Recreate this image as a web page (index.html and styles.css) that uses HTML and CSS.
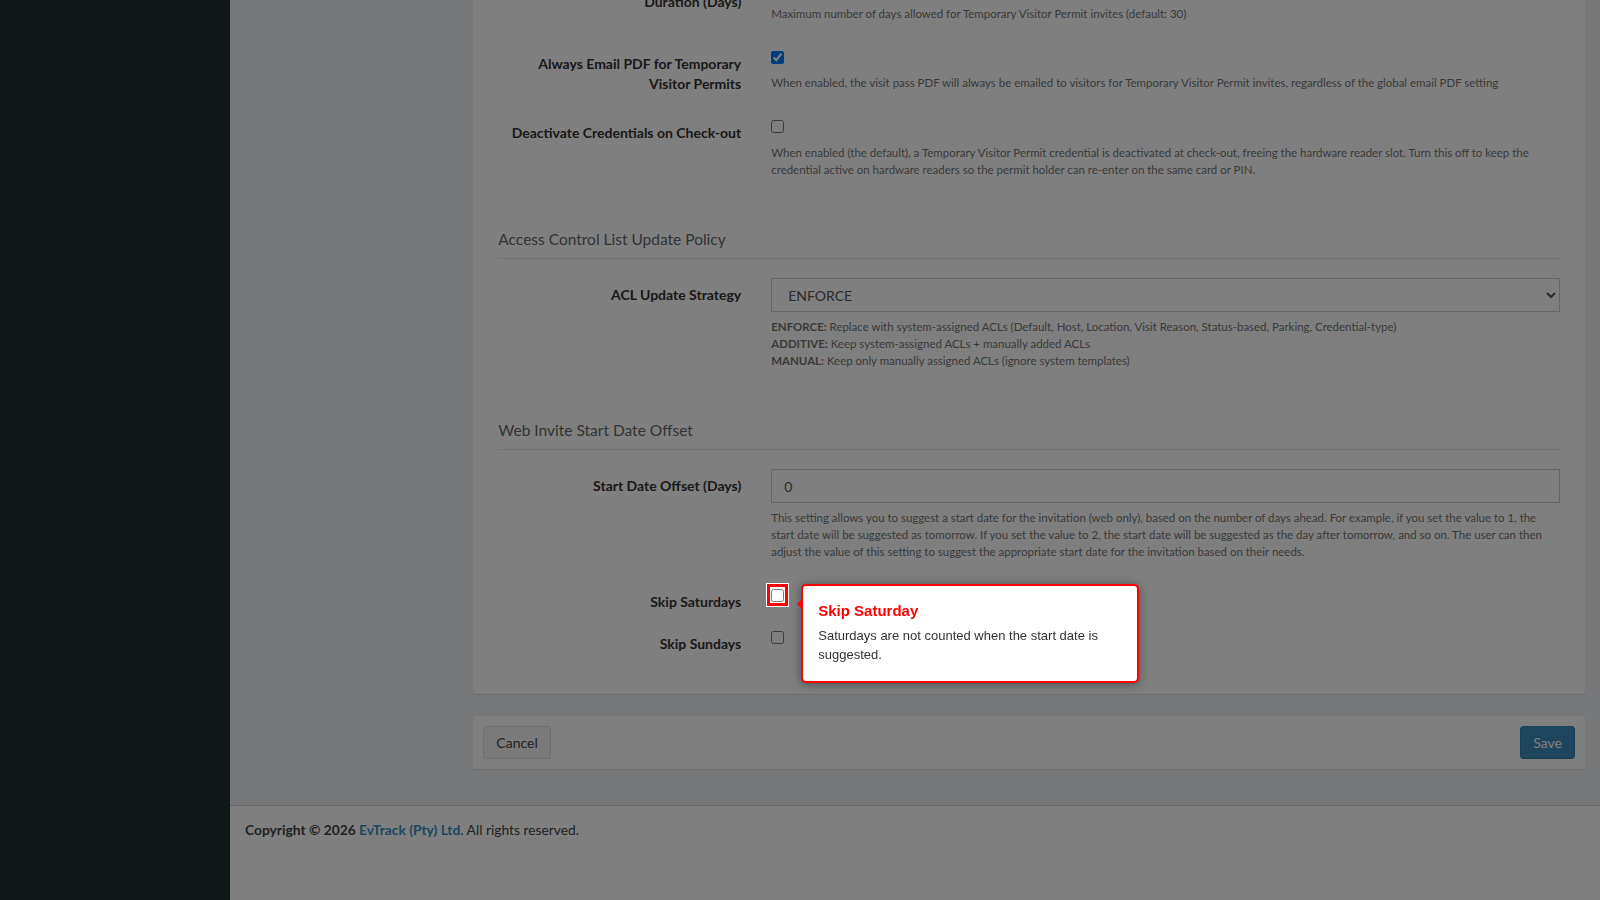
FILE: index.html
```html
<!DOCTYPE html>
<html lang="en">
<head>
    <meta charset="UTF-8">
    <meta name="viewport" content="width=device-width, initial-scale=1.0">
    <title>Settings | EvTrack</title>
    <link rel="stylesheet" href="styles.css">
</head>
<body>
<div class="wrapper">
    <aside class="main-sidebar"></aside>

    <div class="main-panel">
        <div class="content-wrapper">
            <div class="settings-layout">
                <div class="settings-nav"></div>

                <div class="settings-main">
                    <form class="box settings-box">
                        <div class="box-body">

                            <div class="form-row">
                                <label for="tvpMaxDays">Max Temporary Visitor Permit Duration (Days)</label>
                                <div class="control">
                                    <input id="tvpMaxDays" class="form-control" type="number" value="30">
                                    <span class="help">Maximum number of days allowed for Temporary Visitor Permit invites (default: 30)</span>
                                </div>
                            </div>

                            <div class="form-row">
                                <label for="tvpEmailPdf">Always Email PDF for Temporary Visitor Permits</label>
                                <div class="control">
                                    <div class="check-line"><input id="tvpEmailPdf" type="checkbox" checked></div>
                                    <span class="help">When enabled, the visit pass PDF will always be emailed to visitors for Temporary Visitor Permit invites, regardless of the global email PDF setting</span>
                                </div>
                            </div>

                            <div class="form-row">
                                <label for="tvpDeactivate">Deactivate Credentials on Check-out</label>
                                <div class="control">
                                    <div class="check-line"><input id="tvpDeactivate" type="checkbox"></div>
                                    <span class="help">When enabled (the default), a Temporary Visitor Permit credential is deactivated at check-out, freeing the hardware reader slot. Turn this off to keep the credential active on hardware readers so the permit holder can re-enter on the same card or PIN.</span>
                                </div>
                            </div>

                            <h4 class="section-title">Access Control List Update Policy</h4>

                            <div class="form-row">
                                <label for="aclStrategy">ACL Update Strategy</label>
                                <div class="control">
                                    <select id="aclStrategy" class="form-control">
                                        <option selected>ENFORCE</option>
                                        <option>ADDITIVE</option>
                                        <option>MANUAL</option>
                                    </select>
                                    <span class="help">
                                        <b>ENFORCE:</b> Replace with system-assigned ACLs (Default, Host, Location, Visit Reason, Status-based, Parking, Credential-type)<br>
                                        <b>ADDITIVE:</b> Keep system-assigned ACLs + manually added ACLs<br>
                                        <b>MANUAL:</b> Keep only manually assigned ACLs (ignore system templates)
                                    </span>
                                </div>
                            </div>

                            <h4 class="section-title">Web Invite Start Date Offset</h4>

                            <div class="form-row">
                                <label for="startOffset">Start Date Offset (Days)</label>
                                <div class="control">
                                    <input id="startOffset" class="form-control" type="text" value="0">
                                    <span class="help">This setting allows you to suggest a start date for the invitation (web only), based on the number of days ahead. For example, if you set the value to 1, the start date will be suggested as tomorrow. If you set the value to 2, the start date will be suggested as the day after tomorrow, and so on. The user can then adjust the value of this setting to suggest the appropriate start date for the invitation based on their needs.</span>
                                </div>
                            </div>

                            <div class="form-row">
                                <label for="skipSat">Skip Saturdays</label>
                                <div class="control">
                                    <div class="check-line">
                                        <span class="tour-target">
                                            <input id="skipSat" type="checkbox">
                                            <span class="tour-tip">
                                                <span class="tour-tip-title">Skip Saturday</span>
                                                <span class="tour-tip-text">Saturdays are not counted when the start date is suggested.</span>
                                            </span>
                                        </span>
                                    </div>
                                </div>
                            </div>

                            <div class="form-row">
                                <label for="skipSun">Skip Sundays</label>
                                <div class="control">
                                    <div class="check-line"><input id="skipSun" type="checkbox"></div>
                                </div>
                            </div>

                        </div>
                    </form>

                    <div class="box box-actions">
                        <button type="button" class="btn btn-default">Cancel</button>
                        <button type="button" class="btn btn-primary">Save</button>
                    </div>
                </div>
            </div>
        </div>

        <footer class="main-footer">
            <strong>Copyright &copy; 2026 <a href="#">EvTrack (Pty) Ltd.</a></strong> All rights reserved.
        </footer>
    </div>
</div>

<div class="tour-overlay"></div>
</body>
</html>
```

FILE: styles.css
```css
* {
    box-sizing: border-box;
}

html, body {
    margin: 0;
    padding: 0;
    height: 100%;
}

body {
    font-family: Lato, "Source Sans Pro", "Helvetica Neue", sans-serif;
    font-size: 14px;
    line-height: 20px;
    color: #333;
    background: #ecf0f5;
    overflow: hidden;
}

.wrapper {
    display: grid;
    grid-template-columns: 230px 1fr;
    height: 100vh;
}

.main-sidebar {
    background: #222d32;
}

.main-panel {
    display: flex;
    flex-direction: column;
    min-width: 0;
}

.content-wrapper {
    background: #ecf0f5;
    padding-bottom: 36px;
}

.settings-layout {
    display: grid;
    grid-template-columns: 1fr 5fr;
}

.settings-nav,
.settings-main {
    padding: 0 15px;
}

/* boxes */
.box {
    background: #fff;
    border-radius: 3px;
    box-shadow: 0 1px 1px rgba(0, 0, 0, 0.1);
}

.settings-box {
    /* page is scrolled down, the top of the form is above the fold */
    margin-top: -55px;
    margin-bottom: 22px;
}

.box-body {
    padding: 20px 25px 25px;
}

.box-actions {
    display: flex;
    justify-content: space-between;
    padding: 10px;
}

/* form rows */
.form-row {
    display: grid;
    grid-template-columns: 1fr 3fr;
    margin: 0 -15px 15px;
}

.form-row > label {
    padding: 7px 15px 0;
    text-align: right;
    font-weight: 700;
}

.form-row > .control {
    padding: 0 15px;
}

.check-line {
    height: 22px;
}

.check-line input {
    margin: 4px 0 0;
    width: 13px;
    height: 13px;
    vertical-align: top;
}

.help {
    display: block;
    margin: 5.5px 0 10px;
    font-size: 11.46px;
    line-height: 17px;
    color: #737373;
}

.form-control {
    display: block;
    width: 100%;
    height: 34px;
    padding: 6px 12px;
    font: inherit;
    font-size: 14px;
    color: #555;
    background: #fff;
    border: 1px solid #ccc;
    border-radius: 0;
}

.section-title {
    margin: 41px 0 19.5px;
    padding-bottom: 8px;
    border-bottom: 1px solid #e5e5e5;
    font-size: 15.5px;
    line-height: 21px;
    font-weight: 400;
    color: #666;
}

/* buttons */
.btn {
    font: inherit;
    font-size: 14px;
    line-height: 19px;
    padding: 6px 12px;
    border: 1px solid transparent;
    border-radius: 3px;
    cursor: pointer;
}

.btn-default {
    background: #f4f4f4;
    border-color: #ddd;
    color: #444;
}

.btn-primary {
    background: #3c8dbc;
    border-color: #367fa9;
    color: #fff;
}

/* footer */
.main-footer {
    flex: 1;
    background: #fff;
    border-top: 1px solid #d2d6de;
    padding: 14px 15px 15px;
    font-size: 13.8px;
    color: #444;
}

.main-footer a {
    color: #3c8dbc;
    text-decoration: none;
}

/* guided tour */
.tour-overlay {
    position: fixed;
    top: 0;
    left: 0;
    right: 0;
    bottom: 0;
    background: rgba(0, 0, 0, 0.5);
    z-index: 10;
}

.tour-target {
    position: relative;
    z-index: 20;
    display: inline-block;
    vertical-align: top;
    margin-top: 4px;
    line-height: 0;
}

.tour-target input {
    display: block;
    margin: 0;
}

.tour-target::before {
    content: "";
    position: absolute;
    left: -4px;
    top: -5px;
    right: -4px;
    bottom: -4px;
    border: 3px solid #f00;
    background: #fff;
    box-shadow: 0 0 0 1px #fff;
    z-index: -1;
}

.tour-tip {
    position: absolute;
    left: 30px;
    top: -5px;
    width: 338px;
    padding: 16px 15px;
    background: #fff;
    border: 2px solid #f00;
    border-radius: 5px;
    box-shadow: 0 1px 10px rgba(0, 0, 0, 0.4);
    font-family: "Liberation Sans", Arial, Helvetica, sans-serif;
    color: #333;
    text-align: left;
}

.tour-tip::before {
    content: "";
    position: absolute;
    left: -6px;
    top: 14px;
    border-top: 4px solid transparent;
    border-bottom: 4px solid transparent;
    border-right: 4px solid #f00;
}

.tour-tip-title {
    display: block;
    margin-bottom: 6px;
    font-size: 15px;
    line-height: 18px;
    font-weight: 700;
    color: #f00;
}

.tour-tip-text {
    display: block;
    font-size: 13px;
    line-height: 19.5px;
}
```
